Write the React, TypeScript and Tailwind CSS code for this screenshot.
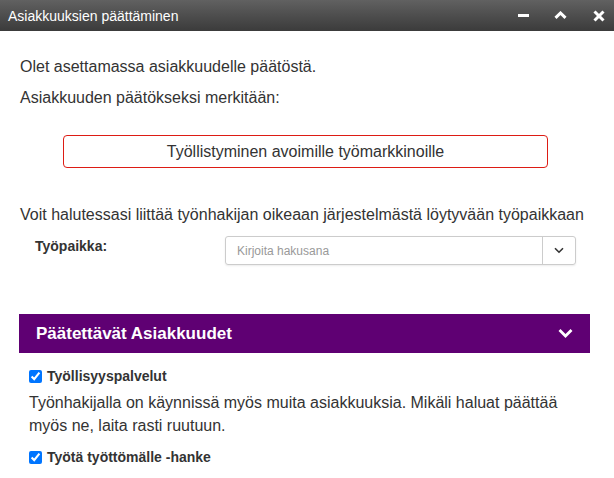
import React from "react";

export default function App() {
  return (
    <div
      className="w-[614px] h-[478px] bg-white overflow-hidden text-[#333]"
      style={{ fontFamily: '"Liberation Sans", Arial, sans-serif' }}
    >
      {/* Title bar */}
      <div className="h-[31px] flex items-center justify-between bg-gradient-to-b from-[#616161] to-[#3b3b3b] pl-[8px] pr-[8px]">
        <span className="text-white text-[14px] leading-[16px]">Asiakkuuksien päättäminen</span>
        <div className="flex items-center">
          <svg width="11" height="3" viewBox="0 0 11 3" className="mr-[25px] mt-[-1px]">
            <rect x="0" y="0" width="11" height="3" fill="#fff" />
          </svg>
          <svg width="13" height="8" viewBox="0 0 13 8" className="mr-[26px] mt-[-2px]">
            <polyline points="1.5,6.8 6.5,2 11.5,6.8" fill="none" stroke="#fff" strokeWidth="3" strokeLinecap="butt" />
          </svg>
          <svg width="12" height="12" viewBox="0 0 12 12" className="mr-[1px]">
            <line x1="1.5" y1="1.5" x2="10.5" y2="10.5" stroke="#fff" strokeWidth="3" />
            <line x1="10.5" y1="1.5" x2="1.5" y2="10.5" stroke="#fff" strokeWidth="3" />
          </svg>
        </div>
      </div>

      {/* Content */}
      <div className="px-[20px]">
        <p className="mt-[25px] text-[16px] leading-[22px]">Olet asettamassa asiakkuudelle päätöstä.</p>
        <p className="mt-[9px] text-[16px] leading-[22px]">Asiakkuuden päätökseksi merkitään:</p>

        <div className="mt-[26px] ml-[43px] w-[485px] h-[33px] border border-[#dd1c14] rounded-[4px] flex items-center justify-center text-[16px] leading-[22px]">
          Työllistyminen avoimille työmarkkinoille
        </div>

        <p className="mt-[36px] text-[16px] leading-[22px] whitespace-nowrap">
          Voit halutessasi liittää työnhakijan oikeaan järjestelmästä löytyvään työpaikkaan
        </p>

        <div className="mt-[10px] flex items-start">
          <div className="w-[205px] pl-[15px] pt-[2px] text-[14px] leading-[16px] font-bold">Työpaikka:</div>
          <div className="w-[351px] h-[29px] flex border border-[#ccc] rounded-[3px] shadow-[0_1px_2px_rgba(0,0,0,0.08)]">
            <input
              readOnly
              placeholder="Kirjoita hakusana"
              className="flex-1 min-w-0 h-full pl-[11px] text-[12px] outline-none bg-transparent placeholder:text-[#999]"
              style={{ fontFamily: '"Liberation Sans", Arial, sans-serif' }}
            />
            <div className="w-[33px] h-full border-l border-[#ccc] flex items-center justify-center">
              <svg width="10" height="7" viewBox="0 0 10 7">
                <polyline points="1,1.2 5,5.2 9,1.2" fill="none" stroke="#333" strokeWidth="1.6" />
              </svg>
            </div>
          </div>
        </div>
      </div>

      {/* Purple section */}
      <div className="mt-[49px] ml-[19px] w-[571px]">
        <div className="h-[39px] bg-[#5f0073] flex items-center justify-between pl-[17px] pr-[17px]">
          <span className="text-white font-bold text-[17px] leading-[20px]">Päätettävät Asiakkuudet</span>
          <svg width="15" height="10" viewBox="0 0 15 10" className="mt-[-1px]">
            <polyline points="1.5,2 7.5,8 13.5,2" fill="none" stroke="#fff" strokeWidth="2.8" />
          </svg>
        </div>

        <div className="pl-[10px]">
          <label className="mt-[13px] flex items-center h-[20px]">
            <input type="checkbox" checked readOnly className="w-[13px] h-[13px] m-0 accent-[#0075ff]" />
            <span className="ml-[5px] text-[14px] leading-[20px] font-bold">Työllisyyspalvelut</span>
          </label>
          <p className="mt-[5px] text-[16px] leading-[23px] pr-[10px]">
            Työnhakijalla on käynnissä myös muita asiakkuuksia. Mikäli haluat päättää myös ne, laita rasti ruutuun.
          </p>
          <label className="mt-[10px] flex items-center h-[20px]">
            <input type="checkbox" checked readOnly className="w-[13px] h-[13px] m-0 accent-[#0075ff]" />
            <span className="ml-[5px] text-[14px] leading-[20px] font-bold">Työtä työttömälle -hanke</span>
          </label>
        </div>
      </div>
    </div>
  );
}
